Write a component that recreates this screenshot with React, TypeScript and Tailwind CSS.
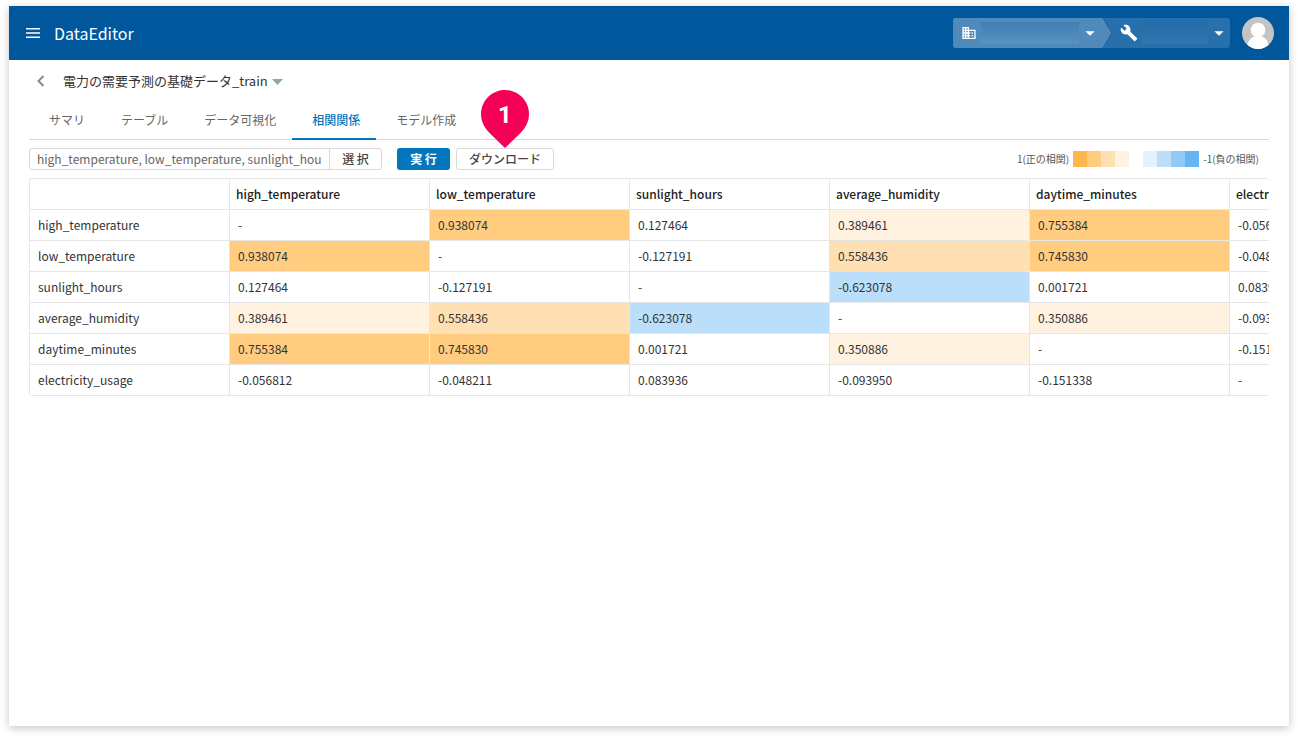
import { useState } from "react"
import { MdArrowDropDown, MdBuild, MdBusiness } from "react-icons/md"

const tabs = ["サマリ", "テーブル", "データ可視化", "相関関係", "モデル作成"]

const columns = [
  "high_temperature",
  "low_temperature",
  "sunlight_hours",
  "average_humidity",
  "daytime_minutes",
  "electricity_usage",
]

const matrix = [
  ["-", "0.938074", "0.127464", "0.389461", "0.755384", "-0.056812"],
  ["0.938074", "-", "-0.127191", "0.558436", "0.745830", "-0.048211"],
  ["0.127464", "-0.127191", "-", "-0.623078", "0.001721", "0.083936"],
  ["0.389461", "0.558436", "-0.623078", "-", "0.350886", "-0.093950"],
  ["0.755384", "0.745830", "0.001721", "0.350886", "-", "-0.151338"],
  ["-0.056812", "-0.048211", "0.083936", "-0.093950", "-0.151338", "-"],
]

const positiveScale = ["bg-[#ffb64d]", "bg-[#ffcc80]", "bg-[#ffe0b2]", "bg-[#fff2e0]"]
const negativeScale = ["bg-[#e3f2fd]", "bg-[#bbdefb]", "bg-[#90caf9]", "bg-[#64b5f6]"]

const cellColor = (value: string) => {
  const n = Number(value)
  if (Number.isNaN(n)) return ""
  if (n >= 0.7) return "bg-[#ffcc80]"
  if (n >= 0.5) return "bg-[#ffe0b2]"
  if (n >= 0.3) return "bg-[#fff2e0]"
  if (n <= -0.5) return "bg-[#bbdefb]"
  return ""
}

const Header = () => (
  <header className="flex h-[54px] items-center justify-between bg-[#00579c] pr-[15px] pl-4 text-white">
    <div className="flex items-center gap-[13px]">
      <button type="button" aria-label="menu" className="flex h-4 w-4 items-center justify-center">
        <svg viewBox="0 0 16 16" className="h-4 w-4" stroke="currentColor" strokeWidth="1.5">
          <path d="M1 3.7h14M1 8h14M1 12.3h14" />
        </svg>
      </button>
      <h1 className="text-base leading-6">DataEditor</h1>
    </div>
    <div className="flex items-center gap-3">
      <div className="relative flex h-[30px] w-[277px] overflow-hidden rounded-[3px]">
        <svg viewBox="0 0 277 30" preserveAspectRatio="none" className="absolute inset-0 h-full w-full" aria-hidden="true">
          <rect width="277" height="30" fill="#2770ab" />
          <path d="M0 0h150l9 15-9 15H0z" fill="#4f8abb" />
          <path d="M150 0l9 15-9 15" fill="none" stroke="#1a609d" />
        </svg>
        <button type="button" aria-label="organization" className="relative flex w-[159px] items-center pl-2">
          <MdBusiness className="h-4 w-4" />
          <span className="ml-1 h-[22px] w-[98px] bg-linear-to-b from-[#3d7fb5] to-[#5a92bf]" />
          <MdArrowDropDown className="h-[22px] w-[22px]" />
        </button>
        <button type="button" aria-label="project" className="relative flex flex-1 items-center pl-2">
          <MdBuild className="h-[18px] w-[18px]" />
          <span className="ml-1 h-[22px] w-[66px] bg-linear-to-b from-[#226da9] to-[#3276af]" />
          <MdArrowDropDown className="h-[22px] w-[22px]" />
        </button>
      </div>
      <button type="button" aria-label="account" className="h-8 w-8">
        <svg viewBox="0 0 32 32" className="h-8 w-8">
          <defs>
            <clipPath id="avatar">
              <circle cx="16" cy="16" r="16" />
            </clipPath>
          </defs>
          <g clipPath="url(#avatar)">
            <rect width="32" height="32" fill="#c4c4c4" />
            <circle cx="16" cy="13" r="7.3" fill="#fff" />
            <path d="M5 32c0-8 4-12 8-12.500h6c4 .5 8 4.500 8 12.500z" fill="#fff" />
          </g>
        </svg>
      </button>
    </div>
  </header>
)

const Pin = () => (
  <span className="pointer-events-none absolute bottom-full left-1/2 flex h-[58px] w-12 -translate-x-1/2 justify-center">
    <svg viewBox="0 0 48 58" className="absolute inset-0 h-full w-full" fill="#f50057" aria-hidden="true">
      <path d="M24 0C37.300 0 48 10.700 48 24c0 8-4 14.500-9 19.500L24 58 9 43.500C4 38.500 0 32 0 24 0 10.700 10.700 0 24 0z" />
    </svg>
    <span className="relative font-['Roboto',sans-serif] text-2xl leading-[50px] font-bold text-white">1</span>
  </span>
)

const Legend = () => (
  <div className="ml-auto flex items-center gap-1 pr-[10px] text-[10px] leading-4 text-[#555]">
    <span>1(正の相関)</span>
    <div className="flex">
      {positiveScale.map((c) => (
        <span key={c} className={`h-4 w-[14px] ${c}`} />
      ))}
    </div>
    <div className="ml-[10px] flex">
      {negativeScale.map((c) => (
        <span key={c} className={`h-4 w-[14px] ${c}`} />
      ))}
    </div>
    <span>-1(負の相関)</span>
  </div>
)

const CorrelationTable = () => (
  <div className="mt-2 overflow-hidden rounded-[3px] border-t border-l border-[#e6e6e6]">
    <table className="w-[1400px] table-fixed border-separate border-spacing-0 text-left text-xs leading-5">
      <thead>
        <tr>
          <td className="h-[31px] border-r border-b border-[#e6e6e6]" />
          {columns.map((c) => (
            <th key={c} scope="col" className="h-[31px] border-r border-b border-[#e6e6e6] px-[6px] font-medium text-[#222]">
              {c}
            </th>
          ))}
        </tr>
      </thead>
      <tbody>
        {matrix.map((row, i) => (
          <tr key={columns[i]}>
            <th scope="row" className="h-[31px] border-r border-b border-[#e6e6e6] px-2 font-normal">
              {columns[i]}
            </th>
            {row.map((value, j) => (
              <td key={columns[j]} className={`h-[31px] border-r border-b border-[#e6e6e6] px-2 ${cellColor(value)}`}>
                {value}
              </td>
            ))}
          </tr>
        ))}
      </tbody>
    </table>
  </div>
)

export default function App() {
  const [active, setActive] = useState("相関関係")

  return (
    <div className="flex min-h-screen bg-white px-[9px] pt-[6px] pb-3 font-['Noto_Sans_CJK_JP',sans-serif] text-[#333]">
      <div className="flex min-w-0 flex-1 flex-col bg-white shadow-[0_2px_8px_rgba(0,0,0,0.24)]">
        <Header />
        <main className="px-5 pt-[11px]">
          <div className="flex h-5 items-center">
            <button type="button" aria-label="back" className="mr-[10px] flex h-5 w-6 items-center justify-center text-[#78909c]">
              <svg viewBox="0 0 12 12" className="h-3 w-3" fill="none" stroke="currentColor" strokeWidth="2">
                <path d="M8.500 1L3.500 6l5 5" />
              </svg>
            </button>
            <button type="button" className="flex items-center gap-1 text-[13px] leading-5">
              電力の需要予測の基礎データ_train
              <svg viewBox="0 0 12 12" className="h-3 w-3" fill="#90a4ae" aria-hidden="true">
                <path d="M0 4h11L5.500 10z" />
              </svg>
            </button>
          </div>

          <nav className="mt-[9px] flex h-10 border-b border-[#d9d9d9]">
            {tabs.map((t) => (
              <button
                key={t}
                type="button"
                onClick={() => setActive(t)}
                className={`-mb-px border-b-2 pt-[2px] pr-4 pl-5 text-xs ${
                  t === active ? "border-[#0277bd] font-medium text-[#0277bd]" : "border-transparent text-[#666]"
                }`}
              >
                {t}
              </button>
            ))}
          </nav>

          <div className="mt-2 flex h-[22px] items-center">
            <div className="flex h-[22px] w-[353px] rounded-[3px] border border-[#d9d9d9]">
              <input
                readOnly
                aria-label="columns"
                value={columns.join(", ")}
                className="min-w-0 flex-1 px-[7px] text-xs leading-5 text-[#666] outline-none"
              />
              <button type="button" className="w-[52px] border-l border-[#d9d9d9] text-xs leading-5 font-medium text-[#444]">
                選 択
              </button>
            </div>
            <button type="button" className="ml-[15px] h-[22px] w-[53px] rounded-[3px] bg-[#0277bd] text-xs leading-5 font-bold text-white">
              実 行
            </button>
            <div className="relative ml-[6px]">
              <button type="button" className="block h-[22px] w-[98px] rounded-[3px] border border-[#d9d9d9] text-xs leading-5 font-medium text-[#444]">
                ダウンロード
              </button>
              <Pin />
            </div>
            <Legend />
          </div>

          <CorrelationTable />
        </main>
      </div>
    </div>
  )
}
